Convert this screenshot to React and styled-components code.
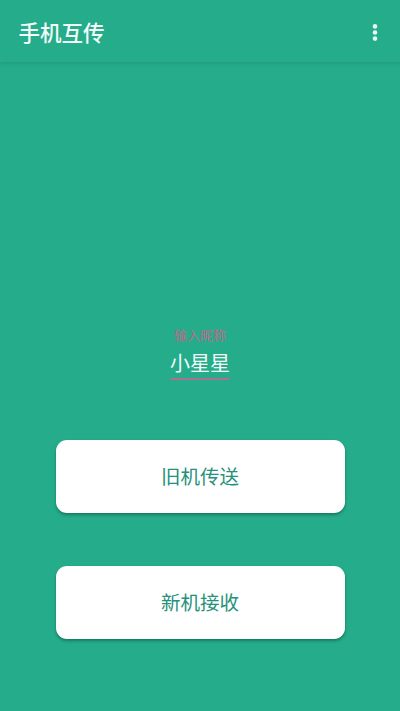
import styled, { createGlobalStyle } from 'styled-components';

const GlobalStyle = createGlobalStyle`
  html, body {
    margin: 0;
    padding: 0;
    background: #25ac8a;
  }
  body {
    font-family: "Noto Sans CJK SC", "Liberation Sans", sans-serif;
  }
`;

export default function App() {
  return (
    <>
      <GlobalStyle />
      <Page>
        <Header>
          <Title>手机互传</Title>
          <MoreIcon width="6" height="17" viewBox="0 0 6 17">
            <circle cx="3" cy="2.4" r="2.3" />
            <circle cx="3" cy="8.5" r="2.3" />
            <circle cx="3" cy="14.6" r="2.3" />
          </MoreIcon>
        </Header>
        <NameBlock>
          <NameLabel>输入昵称</NameLabel>
          <NameValue>小星星</NameValue>
        </NameBlock>
        <Actions>
          <ActionButton>旧机传送</ActionButton>
          <ActionButton>新机接收</ActionButton>
        </Actions>
      </Page>
    </>
  );
}

const Page = styled.div`
  width: 400px;
  height: 711px;
  overflow: hidden;
  display: flex;
  flex-direction: column;
  align-items: center;
  background: #25ac8a;
`;

const Header = styled.header`
  width: 100%;
  height: 62px;
  box-sizing: border-box;
  padding: 2px 22px 0 18.5px;
  display: flex;
  align-items: center;
  justify-content: space-between;
  flex-shrink: 0;
  box-shadow: 0 1px 4px rgba(20, 110, 88, 0.3);
`;

const Title = styled.h1`
  margin: 0;
  font-size: 21.5px;
  line-height: 30px;
  font-weight: 500;
  color: #f2fbf8;
`;

const MoreIcon = styled.svg`
  fill: #e6f7f3;
`;

const NameBlock = styled.div`
  margin-top: 265px;
  display: flex;
  flex-direction: column;
  align-items: center;
`;

const NameLabel = styled.div`
  font-size: 13px;
  line-height: 16px;
  color: #bd6a8d;
`;

const NameValue = styled.div`
  margin-top: 6px;
  font-size: 20px;
  line-height: 28px;
  width: 60px;
  text-align: center;
  white-space: nowrap;
  color: #f4fcfa;
  padding-bottom: 1px;
  border-bottom: 2px solid #a9708f;
`;

const Actions = styled.div`
  margin-top: 60px;
  display: flex;
  flex-direction: column;
  gap: 53px;
`;

const ActionButton = styled.button`
  width: 289px;
  height: 73px;
  padding: 0 0 2px;
  border: none;
  border-radius: 11px;
  background: #ffffff;
  color: #26917a;
  font-family: inherit;
  font-weight: 400;
  font-size: 19.5px;
  box-shadow: 0 2px 3px rgba(15, 80, 65, 0.55);
`;
